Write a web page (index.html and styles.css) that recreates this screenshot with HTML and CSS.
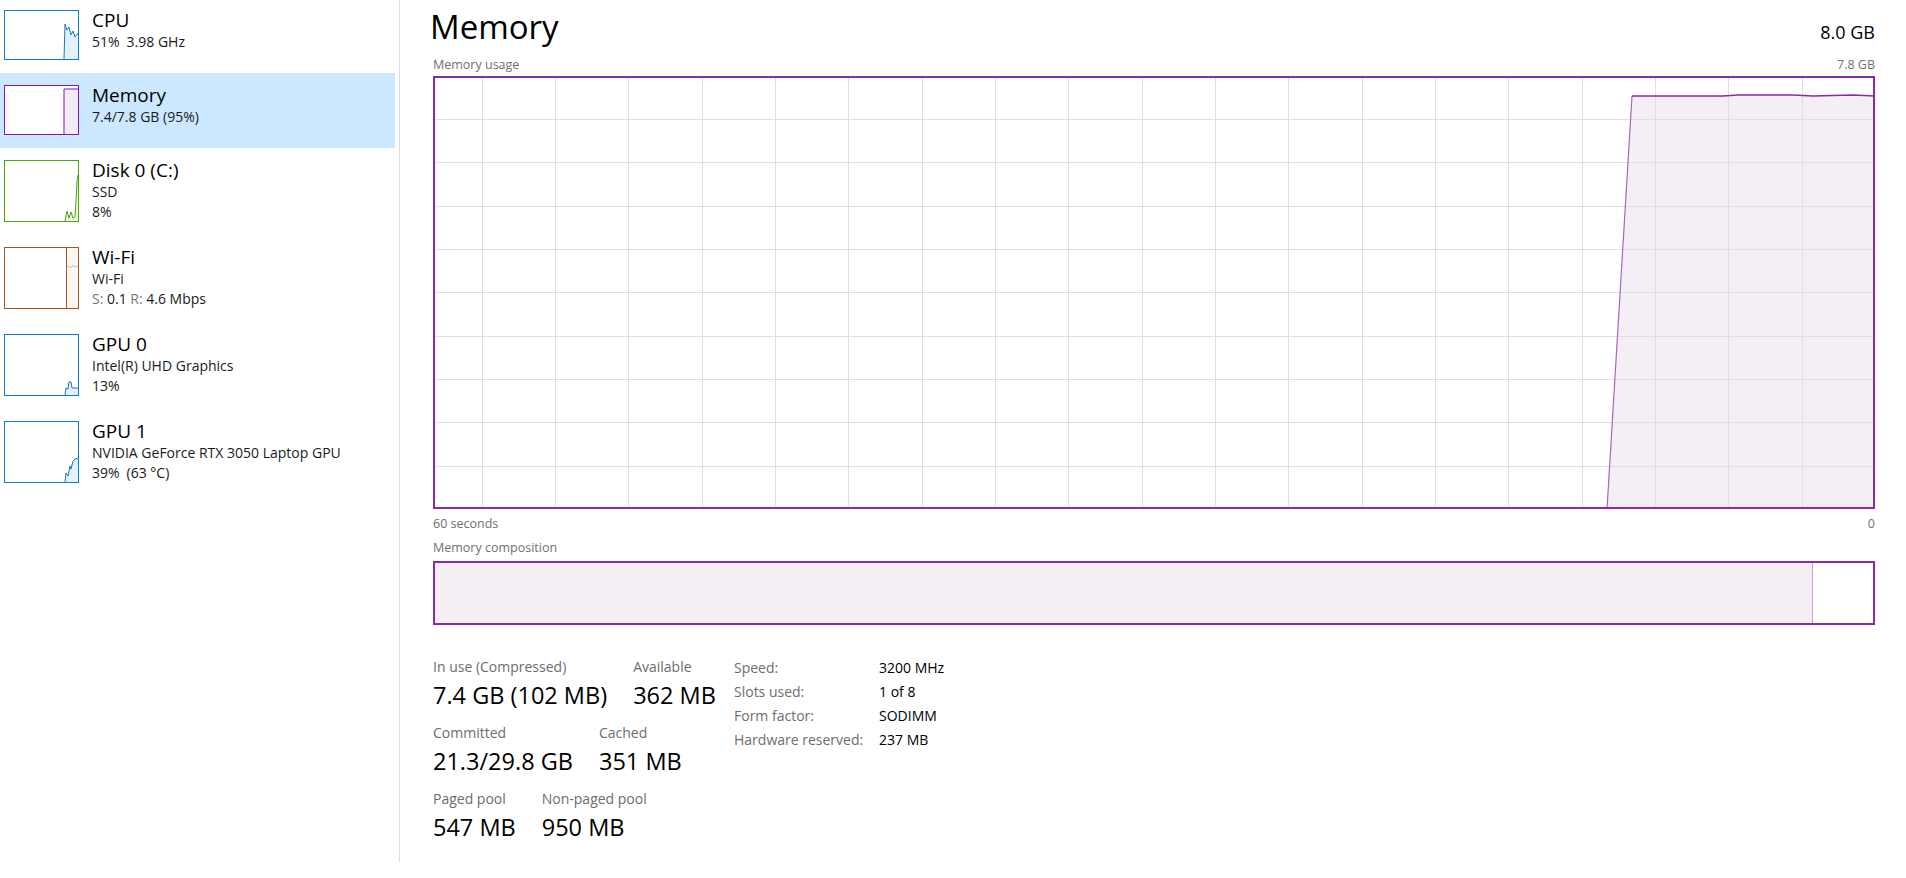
FILE: index.html
```html
<!DOCTYPE html>
<html lang="en">
<head>
<meta charset="utf-8">
<title>Task Manager - Memory</title>
<link rel="stylesheet" href="styles.css">
</head>
<body>
<div class="app">
  <aside class="sidebar">
    <ul class="perf-list">
      <li class="perf-item">
        <svg class="thumb thumb-cpu" viewBox="0 0 73 48" preserveAspectRatio="none">
          <path class="fill-cpu" d="M59 48 L60 13 L62 19 L64 16 L66 24 L68 20 L70 26 L73 22 L73 48 Z"/>
          <polyline class="line-cpu" points="59,48 60,13 62,19 64,16 66,24 68,20 70,26 73,22"/>
        </svg>
        <div class="perf-text">
          <div class="perf-title">CPU</div>
          <div class="perf-sub">51%<span class="gap">3.98 GHz</span></div>
        </div>
      </li>
      <li class="perf-item selected">
        <svg class="thumb thumb-mem" viewBox="0 0 73 48" preserveAspectRatio="none">
          <rect class="fill-mem" x="59" y="3" width="14" height="45"/>
          <polyline class="line-mem" points="59,48 59,3 73,3"/>
        </svg>
        <div class="perf-text">
          <div class="perf-title">Memory</div>
          <div class="perf-sub">7.4/7.8 GB (95%)</div>
        </div>
      </li>
      <li class="perf-item">
        <svg class="thumb thumb-tall thumb-disk" viewBox="0 0 73 60" preserveAspectRatio="none">
          <path class="fill-disk" d="M60 60 L62 50 L64 57 L66 51 L68 57 L70 56 L71 40 L72 20 L73 14 L73 60 Z"/>
          <polyline class="line-disk" points="60,60 62,50 64,57 66,51 68,57 70,56 71,40 72,20 73,14"/>
        </svg>
        <div class="perf-text">
          <div class="perf-title">Disk 0 (C:)</div>
          <div class="perf-sub">SSD</div>
          <div class="perf-sub">8%</div>
        </div>
      </li>
      <li class="perf-item">
        <svg class="thumb thumb-tall thumb-wifi" viewBox="0 0 73 60" preserveAspectRatio="none">
          <rect class="fill-wifi" x="61" y="0" width="12" height="60"/>
          <polyline class="squig-wifi" points="62,19 64,18 66,20 68,17 70,19 73,18"/>
          <line class="line-wifi" x1="61.5" y1="0" x2="61.5" y2="60"/>
        </svg>
        <div class="perf-text">
          <div class="perf-title">Wi-Fi</div>
          <div class="perf-sub">Wi-Fi</div>
          <div class="perf-sub"><span class="dim">S:</span> 0.1 <span class="dim">R:</span> 4.6 Mbps</div>
        </div>
      </li>
      <li class="perf-item">
        <svg class="thumb thumb-tall thumb-gpu" viewBox="0 0 73 60" preserveAspectRatio="none">
          <path class="fill-gpu" d="M60 60 L61 53 L63 54 L64 47 L66 47 L67 53 L73 53 L73 60 Z"/>
          <polyline class="line-gpu" points="60,60 61,53 63,54 64,47 66,47 67,53 73,53"/>
        </svg>
        <div class="perf-text">
          <div class="perf-title">GPU 0</div>
          <div class="perf-sub">Intel(R) UHD Graphics</div>
          <div class="perf-sub">13%</div>
        </div>
      </li>
      <li class="perf-item">
        <svg class="thumb thumb-tall thumb-gpu" viewBox="0 0 73 60" preserveAspectRatio="none">
          <path class="fill-gpu" d="M60 60 L61 51 L63 54 L65 44 L66 47 L68 39 L70 37 L73 36 L73 60 Z"/>
          <polyline class="line-gpu" points="60,60 61,51 63,54 65,44 66,47 68,39 70,37 73,36"/>
        </svg>
        <div class="perf-text">
          <div class="perf-title">GPU 1</div>
          <div class="perf-sub">NVIDIA GeForce RTX 3050 Laptop GPU</div>
          <div class="perf-sub">39%<span class="gap">(63 °C)</span></div>
        </div>
      </li>
    </ul>
  </aside>

  <main class="main">
    <header class="head">
      <h1 class="title">Memory</h1>
      <span class="total">8.0 GB</span>
    </header>

    <div class="cap-row usage-cap"><span>Memory usage</span><span>7.8 GB</span></div>

    <svg class="chart" viewBox="0 0 1442 433" preserveAspectRatio="none">
      <polygon class="chart-fill" points="1174,433 1199,20 1290,20 1305,19 1360,19 1380,20 1420,19 1442,20 1442,433"/>
      <path class="chart-grid" d="M49.5 0V433M122.5 0V433M195.5 0V433M269.5 0V433M342.5 0V433M415.5 0V433M489.5 0V433M562.5 0V433M635.5 0V433M709.5 0V433M782.5 0V433M855.5 0V433M929.5 0V433M1002.5 0V433M1075.5 0V433M1149.5 0V433M1222.5 0V433M1295.5 0V433M1369.5 0V433M0 43.5H1442M0 86.5H1442M0 130.5H1442M0 173.5H1442M0 216.5H1442M0 260.5H1442M0 303.5H1442M0 346.5H1442M0 390.5H1442"/>
      <polyline class="chart-rise" points="1174,433 1199,20"/>
      <polyline class="chart-line" points="1199,20 1290,20 1305,19 1360,19 1380,20 1420,19 1442,20"/>
      <rect class="chart-border" x="1" y="1" width="1440" height="431"/>
    </svg>

    <div class="axis-row"><span>60 seconds</span><span>0</span></div>

    <div class="cap-row comp-cap"><span>Memory composition</span></div>

    <svg class="comp" viewBox="0 0 1442 64" preserveAspectRatio="none">
      <rect class="chart-fill" x="0" y="0" width="1379" height="64"/>
      <line class="comp-split" x1="1379.5" y1="0" x2="1379.5" y2="64"/>
      <rect class="chart-border" x="1" y="1" width="1440" height="62"/>
    </svg>

    <section class="stats">
      <div class="stats-left">
        <div class="stat-row">
          <div class="stat"><div class="stat-label">In use (Compressed)</div><div class="stat-value">7.4 GB (102 MB)</div></div>
          <div class="stat"><div class="stat-label">Available</div><div class="stat-value">362 MB</div></div>
        </div>
        <div class="stat-row">
          <div class="stat"><div class="stat-label">Committed</div><div class="stat-value">21.3/29.8 GB</div></div>
          <div class="stat"><div class="stat-label">Cached</div><div class="stat-value">351 MB</div></div>
        </div>
        <div class="stat-row">
          <div class="stat"><div class="stat-label">Paged pool</div><div class="stat-value">547 MB</div></div>
          <div class="stat"><div class="stat-label">Non-paged pool</div><div class="stat-value">950 MB</div></div>
        </div>
      </div>
      <dl class="specs">
        <dt>Speed:</dt><dd>3200 MHz</dd>
        <dt>Slots used:</dt><dd>1 of 8</dd>
        <dt>Form factor:</dt><dd>SODIMM</dd>
        <dt>Hardware reserved:</dt><dd>237 MB</dd>
      </dl>
    </section>
  </main>
</div>
</body>
</html>
```
FILE: styles.css
```css
html, body {
  margin: 0;
  padding: 0;
  background: #ffffff;
}

body {
  font-family: "Open Sans", "Noto Sans", sans-serif;
  color: #000000;
}

.app {
  display: flex;
  height: 100vh;
  overflow: hidden;
}

/* ---------- sidebar ---------- */
.sidebar {
  flex: none;
  width: 399px;
  height: calc(100vh - 16px);
  border-right: 1px solid #dcdcdc;
}

.perf-list {
  list-style: none;
  margin: -2px 4px 0 0;
  padding: 0;
}

.perf-item {
  display: flex;
  align-items: flex-start;
  gap: 13px;
  padding: 12px 0 13px 4px;
}

.perf-item.selected {
  background: #cce8ff;
}

.thumb {
  flex: none;
  display: block;
  width: 75px;
  height: 50px;
  box-sizing: border-box;
  border: 1px solid;
  background: #ffffff;
}

.thumb-tall {
  height: 62px;
}

.thumb polyline,
.thumb line {
  fill: none;
  stroke-width: 1;
}

.thumb-cpu { border-color: #117dbb; }
.fill-cpu { fill: #e6f0f8; }
.line-cpu { stroke: #117dbb; }

.thumb-mem { border-color: #8b12ae; }
.fill-mem { fill: #f1ecf4; }
.line-mem { stroke: #8b12ae; }

.thumb-disk { border-color: #4da60c; }
.fill-disk { fill: #eef6e6; }
.line-disk { stroke: #4da60c; }

.thumb-wifi { border-color: #9c5a22; }
.fill-wifi { fill: #fbf7f2; }
.line-wifi { stroke: #9c5a22; }
.squig-wifi { stroke: #d9bc9c; }

.thumb-gpu { border-color: #117dbb; }
.fill-gpu { fill: #e6f0f8; }
.line-gpu { stroke: #117dbb; }

.perf-text {
  padding-top: 1px;
}

.perf-title {
  font-size: 19px;
  line-height: 18px;
  margin-bottom: 3px;
  color: #000000;
  white-space: nowrap;
}

.perf-sub {
  font-size: 14px;
  line-height: 20px;
  color: #1a1a1a;
  white-space: nowrap;
}

.gap {
  margin-left: 7px;
}

.dim {
  color: #767676;
}

/* ---------- main ---------- */
.main {
  flex: 1;
  min-width: 0;
  padding: 0 31px 0 33px;
}

.head {
  display: flex;
  justify-content: space-between;
  align-items: baseline;
  height: 54px;
}

.title {
  margin: 0 0 0 -3px;
  font-size: 33px;
  font-weight: 400;
  line-height: 54px;
  color: #000000;
}

.total {
  font-size: 18px;
  color: #000000;
}

.cap-row {
  display: flex;
  justify-content: space-between;
  font-size: 12.5px;
  line-height: 18px;
  color: #707070;
}

.usage-cap {
  padding-top: 2px;
  margin-bottom: 2px;
}

.chart {
  display: block;
  width: 100%;
  height: 433px;
}

.chart-fill {
  fill: #f3eff5;
}

.chart-grid {
  fill: none;
  stroke: #e1dde6;
  stroke-width: 1;
}

.chart-rise {
  fill: none;
  stroke: #a767bd;
  stroke-width: 1.2;
}

.chart-line {
  fill: none;
  stroke: #8b2aa8;
  stroke-width: 1.5;
}

.chart-border {
  fill: none;
  stroke: #8b2aa8;
  stroke-width: 2;
}

.axis-row {
  display: flex;
  justify-content: space-between;
  padding-top: 2px;
  font-size: 12.5px;
  line-height: 25px;
  color: #707070;
}

.comp-cap {
  line-height: 24px;
  margin-bottom: 1px;
}

.comp {
  display: block;
  width: 100%;
  height: 64px;
}

.comp-split {
  stroke: #c9a3d6;
  stroke-width: 1;
}

/* ---------- stats ---------- */
.stats {
  display: flex;
  margin-top: 32px;
}

.stats-left {
  flex: none;
  width: 301px;
  display: flex;
  flex-direction: column;
  gap: 10px;
}

.stat-row {
  display: flex;
  gap: 26px;
}

.stat-label {
  font-size: 14px;
  line-height: 20px;
  color: #6d6d6d;
  white-space: nowrap;
}

.stat-value {
  font-size: 23.5px;
  line-height: 36px;
  color: #000000;
  white-space: nowrap;
}

.specs {
  display: grid;
  grid-template-columns: 145px auto;
  grid-auto-rows: 24px;
  align-content: start;
  margin: -1px 0 0 0;
  font-size: 14px;
  line-height: 24px;
}

.specs dt {
  color: #6d6d6d;
  white-space: nowrap;
}

.specs dd {
  margin: 0;
  color: #000000;
  white-space: nowrap;
}
```
